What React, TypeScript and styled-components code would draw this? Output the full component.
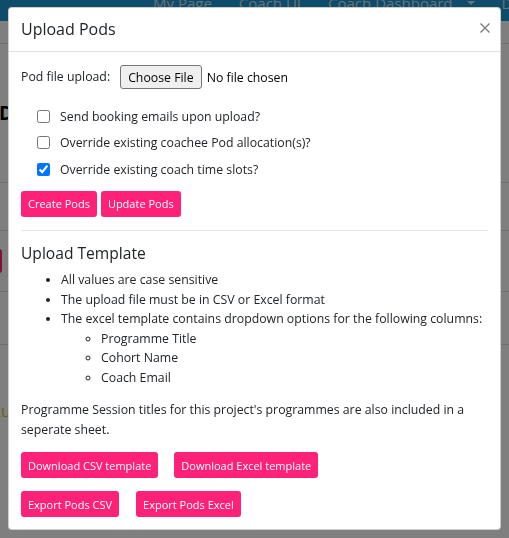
import React from "react";
import styled, { createGlobalStyle } from "styled-components";

const FONT = `"Open Sans", "Noto Sans", "Liberation Sans", sans-serif`;
const PINK = "#fd2177";

const GlobalStyle = createGlobalStyle`
  html, body { margin: 0; padding: 0; }
  body {
    font-family: ${FONT};
    font-size: 12.3px;
    color: #212529;
    background: #ffffff;
    overflow: hidden;
  }
  * { box-sizing: border-box; }
`;

/* ---------- background page ---------- */
const Page = styled.div`
  width: 509px;
  height: 538px;
  overflow: hidden;
  background: #ffffff;
`;

const NavBar = styled.nav`
  height: 21px;
  background: #1e98d6;
  display: flex;
  align-items: flex-start;
  padding-left: 153px;
  gap: 27px;
  overflow: hidden;
`;

const NavItem = styled.span`
  margin-top: -7px;
  font-size: 15px;
  color: rgba(255, 255, 255, 0.78);
  white-space: nowrap;
  display: flex;
  align-items: center;
  gap: 14px;
`;

const Caret = styled.span`
  width: 0;
  height: 0;
  border-left: 4px solid transparent;
  border-right: 4px solid transparent;
  border-top: 4px solid rgba(255, 255, 255, 0.78);
`;

const Band = styled.div<{ $h: number }>`
  height: ${(p) => p.$h}px;
  border-bottom: 1px solid #dcdcdc;
  display: flex;
  align-items: center;
`;

const PageHeading = styled.h1`
  margin: 0 0 0 -1px;
  font-size: 19px;
  font-weight: 700;
  color: #000;
`;

const PageButton = styled.span`
  margin-left: -70px;
  width: 72px;
  height: 24px;
  background: ${PINK};
  border-radius: 3px;
`;

const OliveText = styled.div`
  padding-top: 55px;
  color: #c6c02e;
  font-size: 16px;
  margin-left: -9px;
`;

/* ---------- modal ---------- */
const Backdrop = styled.div`
  position: fixed;
  inset: 0;
  background: rgba(0, 0, 0, 0.5);
  padding: 7px 8px 0 8px;
`;

const ModalContent = styled.div`
  background: #fff;
  border: 1px solid rgba(0, 0, 0, 0.2);
  border-radius: 4px;
  display: flex;
  flex-direction: column;
`;

const ModalHeader = styled.div`
  display: flex;
  align-items: center;
  justify-content: space-between;
  height: 44px;
  padding: 0 12px;
  border-bottom: 1px solid #dee2e6;
`;

const ModalTitle = styled.h5`
  margin: 0;
  font-size: 16px;
  font-weight: 500;
  line-height: 1.2;
  color: #212529;
`;

const CloseButton = styled.button`
  border: 0;
  background: transparent;
  padding: 0;
  margin: -4px -3px 0 0;
  width: 12px;
  height: 12px;
  display: flex;
  align-items: center;
  justify-content: center;
  cursor: pointer;
`;

const ModalBody = styled.div`
  padding: 12px;
  display: flex;
  flex-direction: column;
`;

const FileRow = styled.div`
  display: flex;
  align-items: center;
  height: 26px;
`;

const FieldLabel = styled.label`
  margin-right: 10px;
  line-height: 1.5;
`;

const FilePicker = styled.label`
  display: flex;
  align-items: center;
  gap: 5px;
  cursor: pointer;
  input { display: none; }
`;

const ChooseButton = styled.span`
  display: inline-flex;
  align-items: center;
  height: 24px;
  padding: 0 7px;
  background: #efefef;
  border: 1px solid #767676;
  border-radius: 3px;
  color: #000;
`;

const FileName = styled.span`
  color: #000;
`;

const CheckList = styled.div`
  margin-top: 13px;
  padding-left: 16px;
  display: flex;
  flex-direction: column;
`;

const CheckRow = styled.label`
  display: flex;
  align-items: center;
  height: 26.5px;
  gap: 10px;
  input {
    margin: 0;
    width: 13px;
    height: 13px;
  }
`;

const ButtonRow = styled.div<{ $gap: number; $mt: number }>`
  display: flex;
  gap: ${(p) => p.$gap}px;
  margin-top: ${(p) => p.$mt}px;
`;

const PinkButton = styled.button`
  height: 26px;
  padding: 0 7px;
  border: 0;
  border-radius: 3px;
  background: ${PINK};
  color: #fff;
  font-family: ${FONT};
  font-size: 11px;
  font-weight: 500;
  cursor: pointer;
`;

const Divider = styled.hr`
  margin: 13px 0 0 0;
  border: 0;
  border-top: 1px solid #e6e6e6;
`;

const SectionTitle = styled.h5`
  margin: 13px 0 8px 0;
  font-size: 15.6px;
  font-weight: 500;
  line-height: 1.2;
`;

const List = styled.ul<{ $circle?: boolean }>`
  margin: 0;
  padding-left: 40px;
  list-style-type: ${(p) => (p.$circle ? "circle" : "disc")};
`;

const ListItem = styled.li`
  line-height: 19.5px;
`;

const Paragraph = styled.p`
  margin: 13px 0 0 0;
  line-height: 20px;
`;

export default function App() {
  return (
    <>
      <GlobalStyle />
      <Page>
        <NavBar>
          <NavItem>My Page</NavItem>
          <NavItem>Coach UI</NavItem>
          <NavItem>
            Coach Dashboard <Caret />
          </NavItem>
          <NavItem>Dashboard</NavItem>
        </NavBar>
        <Band $h={23} />
        <Band $h={139}>
          <PageHeading>Dashboard</PageHeading>
        </Band>
        <Band $h={48} />
        <Band $h={61}>
          <PageButton />
        </Band>
        <Band $h={53} />
        <OliveText>Run report</OliveText>
      </Page>

      <Backdrop>
        <ModalContent>
          <ModalHeader>
            <ModalTitle>Upload Pods</ModalTitle>
            <CloseButton aria-label="Close">
              <svg width="10" height="10" viewBox="0 0 10 10">
                <path d="M0.5 0.5 L9.5 9.5 M9.5 0.5 L0.5 9.5" stroke="#7d7d7d" strokeWidth="1.4" />
              </svg>
            </CloseButton>
          </ModalHeader>
          <ModalBody>
            <FileRow>
              <FieldLabel>Pod file upload:</FieldLabel>
              <FilePicker>
                <input type="file" />
                <ChooseButton>Choose File</ChooseButton>
                <FileName>No file chosen</FileName>
              </FilePicker>
            </FileRow>

            <CheckList>
              <CheckRow>
                <input type="checkbox" />
                <span>Send booking emails upon upload?</span>
              </CheckRow>
              <CheckRow>
                <input type="checkbox" />
                <span>Override existing coachee Pod allocation(s)?</span>
              </CheckRow>
              <CheckRow>
                <input type="checkbox" defaultChecked />
                <span>Override existing coach time slots?</span>
              </CheckRow>
            </CheckList>

            <ButtonRow $gap={4} $mt={8}>
              <PinkButton>Create Pods</PinkButton>
              <PinkButton>Update Pods</PinkButton>
            </ButtonRow>

            <Divider />

            <SectionTitle>Upload Template</SectionTitle>
            <List>
              <ListItem>All values are case sensitive</ListItem>
              <ListItem>The upload file must be in CSV or Excel format</ListItem>
              <ListItem>
                The excel template contains dropdown options for the following columns:
                <List $circle>
                  <ListItem>Programme Title</ListItem>
                  <ListItem>Cohort Name</ListItem>
                  <ListItem>Coach Email</ListItem>
                </List>
              </ListItem>
            </List>

            <Paragraph>
              Programme Session titles for this project's programmes are also included in a seperate sheet.
            </Paragraph>

            <ButtonRow $gap={16} $mt={12}>
              <PinkButton>Download CSV template</PinkButton>
              <PinkButton>Download Excel template</PinkButton>
            </ButtonRow>
            <ButtonRow $gap={17} $mt={13}>
              <PinkButton>Export Pods CSV</PinkButton>
              <PinkButton>Export Pods Excel</PinkButton>
            </ButtonRow>
          </ModalBody>
        </ModalContent>
      </Backdrop>
    </>
  );
}
